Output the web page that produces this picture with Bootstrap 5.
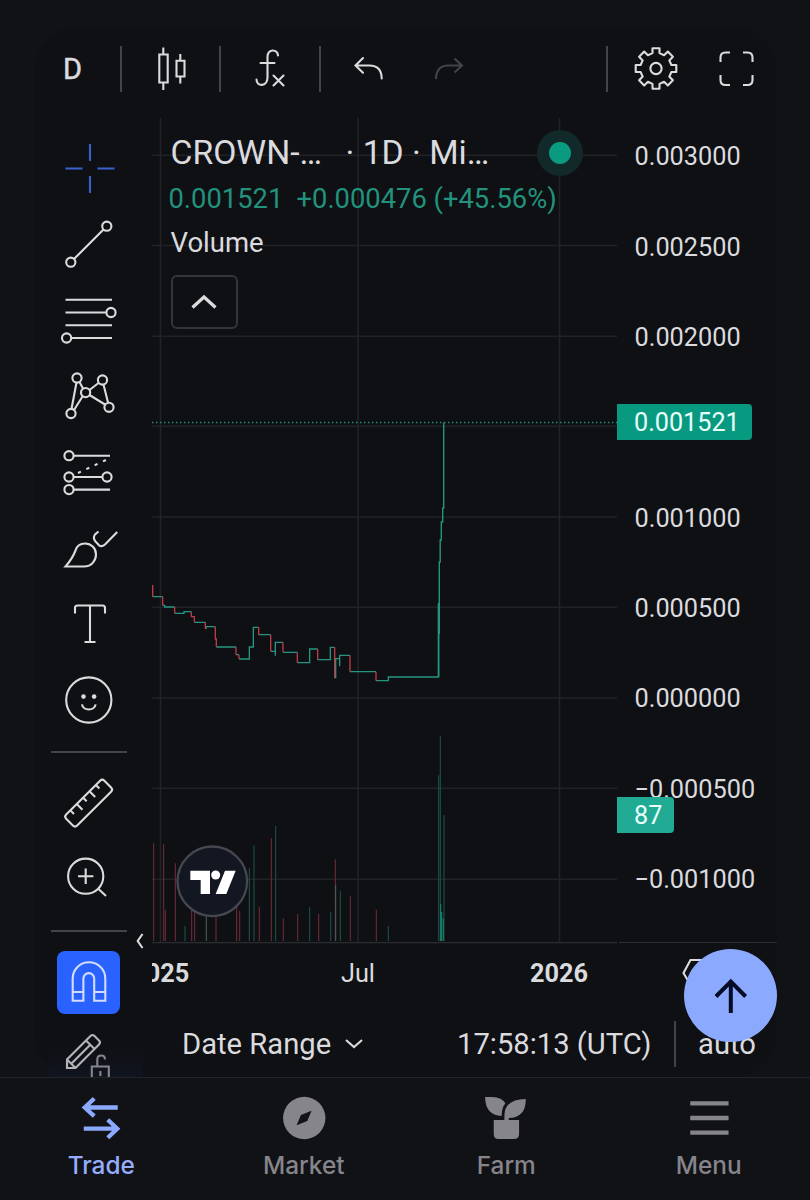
<!DOCTYPE html>
<html lang="en" data-bs-theme="dark">
<head>
<meta charset="utf-8">
<meta name="viewport" content="width=device-width, initial-scale=1">
<title>CROWN chart</title>
<link href="https://cdn.jsdelivr.net/npm/bootstrap@5.3.0/dist/css/bootstrap.min.css" rel="stylesheet">
<style>
  body { background:#111216; color:#dbdbdf; font-family:Roboto,"Liberation Sans",sans-serif; height:1200px; overflow:hidden; }
  svg { display:block; flex:none; overflow:visible; }
  .ic { fill:none; stroke:#dbdbde; stroke-width:2.1; }
  .panel { width:743px; height:1050px; margin:27px 0 0 34px; background:#0f1014; border-radius:44px; }
  .topbar { height:91px; padding-bottom:8px; }
  .topbar .cell { height:46px; border-right:2px solid #43444b; }
  .topbar svg { position:relative; top:.5px; }
  .interval { font-size:29px; line-height:1; -webkit-text-stroke:.5px #dbdbdf; position:relative; top:1px; }
  .side { width:118px; flex:none; padding:13px 0 0 17px; }
  .side hr { width:76px; height:2px; border:0; background:#43444b; opacity:1; }
  .magnet { width:63px; height:63px; background:#2962ff; border-radius:8px; margin:19px 0 0 6px; }
  .lockbox { height:63px; overflow:hidden; background:linear-gradient(#0f101400 50%,#10141f); width:94px; margin-left:-2px; padding-left:1px; }
  .plot { width:465px; flex:none; }
  .legend { left:18.500px; top:0; white-space:nowrap; }
  .sym { font-size:33.700px; line-height:40px; margin-top:15px; }
  .chg { font-size:27.350px; line-height:36px; margin:8px 0 0 -2px; color:#22927c; }
  .vol { font-size:27.500px; line-height:36px; margin-top:8px; }
  .collapse-btn { width:67px; height:54px; border:2px solid #34353b; border-radius:6px; margin-top:14px; }
  .live { width:46px; height:46px; background:#12292a; left:385px; top:12px; }
  .live i { width:22px; height:22px; background:#0a9a80; }
  .axis { width:158px; flex:none; height:825px; border-bottom:1px solid #2c2d33; margin-left:2px; }
  .axis .tick { height:90.350px; font-size:25.300px; padding-left:15.500px; }
  .axis .ticks { margin-top:-6px; }
  .tag { left:-2px; height:36px; font-size:25.200px; padding:2px 0 0 17px; color:#e9fffb; border-radius:0 4px 4px 0; }
  .tag-price { top:286px; width:135px; background:#089a80; }
  .tag-vol { top:679px; width:57px; background:#22ab94; }
  .handle { left:100px; top:905px; }
  .foot { height:50px; width:625px; font-size:29.200px; line-height:50px; white-space:nowrap; }
  .fab { left:684px; top:949px; width:93px; height:93px; background:#8ba9ff; }
  .tabs { height:123px; border-top:1px solid #232429; font:500 24.400px/30px Inter,sans-serif; color:#85858b; }
  .tabs a { color:inherit; padding-top:18px; text-decoration:none; }
  .tabs .on { color:#96adff; }
  .tabs span { margin-top:10px; }
</style>
</head>
<body>
<main class="panel position-relative d-flex flex-column">
  <header class="topbar d-flex align-items-center">
    <div class="cell d-flex align-items-center" style="width:88px;padding-left:29px"><span class="interval">D</span></div>
    <div class="cell d-flex align-items-center justify-content-center" style="width:99px">
      <svg class="ic" width="32" height="46" viewBox="155 46 32 46"><path d="M159.300 54.500h8.400v28h-8.400zM163.300 47.500v7M163.300 82.500v7.500M176.500 60.700h8v15.800h-8zM180.300 54v6.500M180.300 76.500v7"/></svg>
    </div>
    <div class="cell d-flex align-items-center justify-content-center" style="width:100px">
      <svg class="ic" width="32" height="46" viewBox="254 46 32 46" stroke-linecap="round"><path d="M278 55.500C278 49 267.500 48 267.500 57v20.500C267.500 87 256.500 87 256.500 79.500M260.500 63h14M273.500 75.500l10 10M283.500 75.500l-10 10"/></svg>
    </div>
    <svg class="ic" width="32" height="46" viewBox="353 46 32 46" style="margin-left:32px" stroke-linecap="round"><path d="M363 58l-7.500 7.500 7.500 7.200M356 65.500h13.500q12 0 12.200 13"/></svg>
    <svg class="ic" width="32" height="46" viewBox="433 46 32 46" style="margin-left:48px;stroke:#43444a"><path d="M454.500 58.500l7.500 7-7.500 7M462 65.500h-14q-11.500 0-12 13.500"/></svg>
    <div class="cell" style="width:143px"></div>
    <svg class="ic" width="44" height="46" viewBox="-22 -22.500 44 46" style="margin-left:26px"><path stroke-linejoin="round" d="M-3.500-15.400V-20.300H3.500V-15.400L8.100-13.300 11.800-16.900 16.900-11.800 13.300-8.100 15.400-3.500H20.300V3.500H15.400L13.300 8.100 16.900 11.800 11.800 16.900 8.100 13.300 3.500 15.400V20.300H-3.500V15.400L-8.100 13.300-11.800 16.900-16.900 11.800-13.300 8.100-15.400 3.500H-20.300V-3.500H-15.400L-13.300-8.100-16.900-11.800-11.800-16.900-8.100-13.300Z"/><circle r="5.600"/></svg>
    <svg class="ic" width="38" height="46" viewBox="718 46 38 46" style="margin-left:40px"><path d="M720.500 62v-4.500q0-5 5-5h4.500M743 52.500h4.500q5 0 5 5v4.500M752.500 75v5q0 5-5 5h-4.500M730 85h-4.500q-5 0-5-5v-5"/></svg>
  </header>

  <div class="d-flex flex-grow-1">
    <aside class="side d-flex flex-column">
      <svg class="ic" width="76" height="76" viewBox="51 131 76 76" style="stroke:#3a60cf"><path d="M65.500 168.500h17M97.500 168.500h17M90 144v17M90 176v17"/></svg>
      <svg class="ic" width="76" height="76" viewBox="51 207 76 76"><path d="M74 259l29.500-29.500"/><circle cx="70.800" cy="262.200" r="4.600"/><circle cx="106.800" cy="226.200" r="4.600"/></svg>
      <svg class="ic" width="76" height="76" viewBox="51 283 76 76"><path d="M65.500 299.700H112M65.500 312.500H106.500M65.500 325.300H112M71 338H112"/><circle cx="111" cy="312.500" r="4.600"/><circle cx="66.600" cy="338" r="4.600"/></svg>
      <svg class="ic" width="76" height="76" viewBox="51 359 76 76"><path d="M76.500 382.500L71.500 409M79.500 382l3.500 6.500M82.500 396.500L74 410M89.500 390l9-7M103.500 384.500l4.500 18M89.500 395l15.500 9.500"/><circle cx="77" cy="378" r="4.600"/><circle cx="102.500" cy="380" r="4.600"/><circle cx="85.600" cy="392.600" r="4.600"/><circle cx="71" cy="413.500" r="4.600"/><circle cx="109" cy="407.300" r="4.600"/></svg>
      <svg class="ic" width="76" height="76" viewBox="51 435 76 76"><path d="M73.500 455.700H110M73.500 477H102M73.500 489.600H110"/><path d="M78 473l30-14" stroke-dasharray="3.200 6"/><circle cx="69" cy="455.700" r="4.600"/><circle cx="69" cy="477" r="4.600"/><circle cx="107" cy="477" r="4.600"/><circle cx="69" cy="489.600" r="4.600"/></svg>
      <svg class="ic" width="76" height="76" viewBox="51 511 76 76"><path d="M65.500 566.500H84C92 566.500 96 560 96 554.500 96 548 91 543.500 85 543.500 79 543.500 76.500 547 75.500 550.500 73 557 69.500 562 65.500 566.500ZM117.200 532L105 544.500Q101.500 547.500 99 545.200L95.500 541.500Q92.500 538 95 534.500L98.500 531.500"/></svg>
      <svg class="ic" width="76" height="76" viewBox="51 587 76 76"><path d="M75 613.500v-5.500q0-2.500 2.500-2.500h25q2.500 0 2.500 2.500v5.500M90 605.500V642M84.500 642H95.500"/></svg>
      <svg class="ic" width="76" height="76" viewBox="51 663 76 76"><circle cx="88.800" cy="700" r="22.600"/><path d="M82 704.300C83 711.200 94.600 711.200 95.600 704.300"/><g fill="#dbdbde" stroke="none"><circle cx="83.500" cy="696.600" r="2.300"/><circle cx="94.100" cy="696.600" r="2.300"/></g></svg>
      <hr style="margin:12px 0 13px">
      <svg class="ic" width="76" height="76" viewBox="51 766 76 76"><g transform="translate(88.800 803.300) rotate(-45)"><rect x="-27" y="-8" width="54" height="15.500" rx="3"/><path d="M-18-8v5M-9-8v8M0-8v5M9-8v8M18-8v5"/></g></svg>
      <svg class="ic" width="76" height="76" viewBox="51 842 76 76"><circle cx="85.700" cy="876.200" r="17.600"/><path d="M78 876.200h15.400M85.700 868.500v15.400M98 888.500l8 7.500"/></svg>
      <hr style="margin:12px 0 0">
      <div class="magnet flex-shrink-0"><svg class="ic" style="stroke:#d3dcff" width="63" height="63" viewBox="57 951 63 63"><path d="M72.700 1000.700V978.500a16.300 16.300 0 0 1 32.600 0V1000.700H94.200V978.500a5.400 5.400 0 0 0-10.800 0V1000.700ZM72.700 992H83.500M94.200 992H105.300"/></svg></div>
      <div class="lockbox flex-shrink-0"><svg class="ic" width="76" height="63" viewBox="50 1014 76 63" style="stroke:#b4b5b9"><path d="M67 1068v-8.500L90.500 1036q2-2 4 0l4.500 4.500q2 2 0 4L75.500 1068ZM67.500 1060l8 8M86 1040.500l8.500 8.500M71.500 1063.500l19-19"/><path stroke="#85868b" d="M91.800 1080V1066.500H108.800V1080M97.300 1066v-6.500q0-4 4-4 3.700 0 3.700 4M100.400 1071v5"/></svg></div>
    </aside>

    <section class="plot position-relative">
      <svg width="465" height="890" viewBox="152 118 465 890" style="overflow:hidden">
        <g stroke="#212227" stroke-width="1.600"><path d="M160.500 118V942M358 118V942M559.500 118V942M152 155.200H617M152 245.500H617M152 336.200H617M152 426.300H617M152 517H617M152 607.200H617M152 698H617M152 788.200H617M152 879.200H617"/></g>
        <path d="M152 942.700H617" stroke="#2c2d33" stroke-width="1.300"/>
        <path d="M152 422.500H617" stroke="#22927c" stroke-width="1.400" stroke-dasharray="1.400 2.600"/>
        <!-- volume bars -->
        <g transform="translate(150 720) scale(.33333)" stroke-width="3.300" fill="none">
          <path stroke="#6b2c34" d="M11 370V663M41 372V663M46 570V663M76 430V663M125 560V663M134 560V663M198 560V663M260 560V663M269 572V663M328 560V663M364 354V663M400 595V663M443 582V663M506 582V663M556 418V663M601 527V663M679 569V663"/>
          <path stroke="#1b5147" d="M105 618V663M298 445V663M312 376V663M377 318V663M479 562V663M542 575V663M571 512V663M715 618V663M866 166V663M871 48V663M882 285V663"/>
          <path stroke="#4b5c53" d="M169 560V663M557 495V663"/>
          <path stroke="#17806c" d="M872 552V663M875 575V663M880 595V663"/>
        </g>
        <!-- price steps -->
        <g transform="translate(150 560) scale(.33333)" stroke-width="4" fill="none">
          <path stroke="#269581" d="M8 110H38M38 136H44V141H74M74 160H102V155H124M133 187H166M168 207V200H196M199 261H258M258 284H267M267 297H298V261H310V202H326M326 224H362M362 274H376M376 287V247H399M399 277H442M442 308H479V267H503M503 299H541V262H554M557 355V296H568M569 319V286H600M600 335H678M678 362H715V351H865V130"/>
          <path stroke="#bc3c48" d="M8 75V110M38 110V136M74 141V160M124 155V170H133V187M166 187V207M196 200V237H199V261M258 261V284M267 284V297M326 202V224M362 224V274M399 247V277M442 277V308M503 267V299M554 262V355M600 286V335M678 335V362"/>
        </g>
        <path d="M438.800 677V603M439.300 634V562H440.200V540H441.300V522H442.700V508H443.700V422.500" fill="none" stroke="#24957f" stroke-width="1.400"/>
        <circle cx="212.300" cy="881.300" r="34.800" fill="#131722" stroke="#464751" stroke-width="2.300"/>
        <g transform="translate(150 720) scale(.33333)" fill="#fff"><path d="M121 452H180V522H152V480H121ZM225 452H257L229 522H197Z"/><circle cx="197" cy="465" r="13.500"/></g>
        <g fill="#dbdbde" font-family="Roboto,sans-serif" font-size="25.300" text-anchor="middle"><text x="160.300" y="981.700" font-weight="700">2025</text><text x="358" y="981.700">Jul</text><text x="559" y="981.700" font-weight="700">2026</text></g>
      </svg>
      <div class="legend position-absolute">
        <div class="sym d-flex"><span style="width:175px">CROWN-…</span><span>· 1D · Mi…</span></div>
        <div class="chg d-flex"><span style="width:128px">0.001521</span><span>+0.000476 (+45.56%)</span></div>
        <div class="vol">Volume</div>
        <div class="collapse-btn d-flex align-items-center justify-content-center"><svg class="ic" width="26" height="16" viewBox="0 0 26 16" style="stroke-width:3.200"><path d="M1.500 13.500L13 3 24.500 13.500"/></svg></div>
      </div>
      <div class="live position-absolute rounded-circle d-flex align-items-center justify-content-center"><i class="rounded-circle"></i></div>
    </section>

    <section class="axis position-relative">
      <div class="ticks d-flex flex-column">
        <div class="tick d-flex align-items-center">0.003000</div>
        <div class="tick d-flex align-items-center">0.002500</div>
        <div class="tick d-flex align-items-center">0.002000</div>
        <div class="tick"></div>
        <div class="tick d-flex align-items-center">0.001000</div>
        <div class="tick d-flex align-items-center">0.000500</div>
        <div class="tick d-flex align-items-center">0.000000</div>
        <div class="tick d-flex align-items-center">−0.000500</div>
        <div class="tick d-flex align-items-center" style="margin-bottom:-40px">−0.001000</div>
      </div>
      <div class="tag tag-price position-absolute d-flex align-items-center">0.001521</div>
      <div class="tag tag-vol position-absolute d-flex align-items-center">87</div>
    </section>
  </div>

  <div class="foot position-absolute end-0 bottom-0 d-flex align-items-center" style="margin-bottom:8px">
    <span style="margin-left:30px;width:163px">Date Range</span>
    <svg class="ic" width="18" height="12" viewBox="0 0 18 12"><path d="M1 2l8 7 8-7"/></svg>
    <span style="margin-left:94px;width:217px">17:58:13 (UTC)</span>
    <span style="width:2px;height:46px;background:#43444b"></span>
    <span style="margin-left:22px">auto</span>
  </div>
  <svg class="ic handle position-absolute" width="12" height="18" viewBox="134 932 12 18"><path d="M142.500 934l-4.800 7 4.800 7"/></svg>
  <svg class="ic position-absolute" style="left:648px;top:930px" width="30" height="30" viewBox="682 957 30 30"><path d="M710 960H690.500L683.500 973 690.500 985"/></svg>
</main>

<button class="fab position-absolute btn p-0 border-0 rounded-circle d-flex align-items-center justify-content-center" aria-label="Scroll to top">
  <svg width="36" height="36" viewBox="712.500 978 36 36" fill="none" stroke="#060b26" stroke-width="4"><path d="M730.300 1013V981M715.500 996.500L730.300 981.500 745.100 996.500"/></svg>
</button>

<nav class="tabs row g-0 text-center">
  <a href="#" class="on col d-flex flex-column align-items-center"><svg width="44" height="44" viewBox="79.250 1096 44 44" fill="none" stroke="#8ba9ff" stroke-width="4.300"><path d="M118 1107.500H85M94.500 1098.500L85 1107.500 94.500 1116.200M84 1128.700H117M108 1119.700L117.500 1128.700 108 1137.700"/></svg><span>Trade</span></a>
  <a href="#" class="col d-flex flex-column align-items-center"><svg width="44" height="44" viewBox="281.750 1096 44 44"><circle cx="304" cy="1118" r="21.200" fill="#85858b"/><path fill="#121317" d="M311.300 1110.700L307 1121 296.300 1125.300 300.700 1115Z"/></svg><span>Market</span></a>
  <a href="#" class="col d-flex flex-column align-items-center"><svg width="44" height="44" viewBox="484.250 1096 44 44" fill="#85858b"><g transform="translate(405 1000) scale(.33333)"><path d="M241 291H262Q292 292 302 310 290 325 291 348 241 345 241 291ZM363 297Q364 352 312 354V360H343V402Q343 417 328 417H281Q267 417 267 402V360H299V345Q300 298 363 297Z"/></g></svg><span>Farm</span></a>
  <a href="#" class="col d-flex flex-column align-items-center"><svg width="44" height="44" viewBox="686.750 1096 44 44" stroke="#85858b" stroke-width="4.300"><path d="M690 1103.300H728.300M690 1118H728.300M690 1132.700H728.300"/></svg><span>Menu</span></a>
</nav>
<script src="https://cdn.jsdelivr.net/npm/bootstrap@5.3.0/dist/js/bootstrap.bundle.min.js"></script>
</body>
</html>
